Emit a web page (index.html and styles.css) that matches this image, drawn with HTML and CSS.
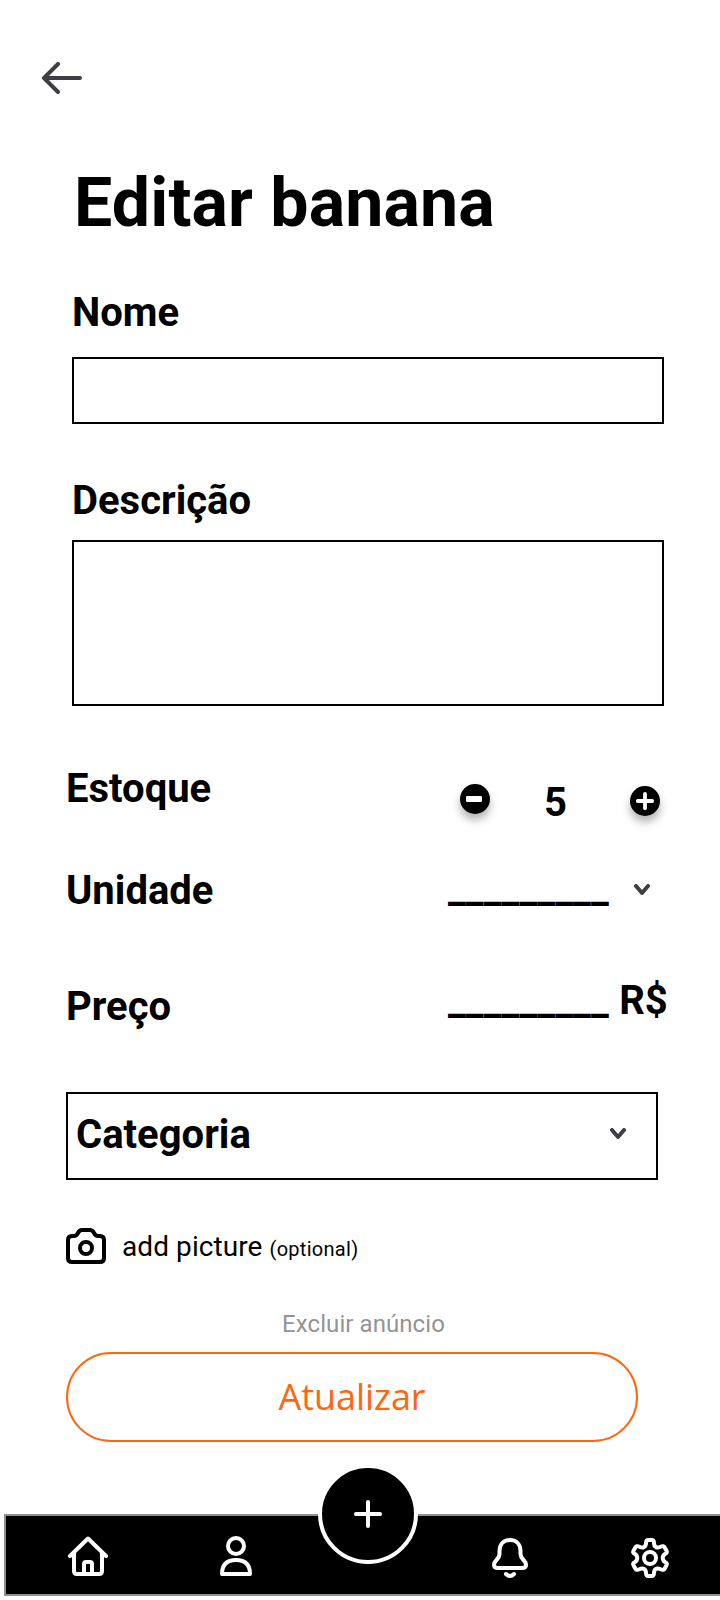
FILE: index.html
```
<!DOCTYPE html>
<html lang="pt-BR">
<head>
<meta charset="utf-8">
<title>Editar banana</title>
<link rel="stylesheet" href="styles.css">
</head>
<body>
<main class="screen">
  <header class="topbar">
    <svg class="back" width="40" height="32" viewBox="0 0 40 32"><path d="M38 16H2M16 2L2 16L16 30"/></svg>
  </header>
  <h1 class="title">Editar banana</h1>
  <form class="form">
    <section class="field">
      <h2 class="label label-name">Nome</h2>
      <div class="box box-name"></div>
    </section>
    <section class="field">
      <h2 class="label label-desc">Descrição</h2>
      <div class="box box-desc"></div>
    </section>
    <div class="row row-stock">
      <span class="label">Estoque</span>
      <div class="stepper">
        <svg class="round minus" width="30" height="30" viewBox="0 0 30 30"><circle cx="15" cy="15" r="15"/><rect x="6" y="12" width="16" height="6" rx="1.2" fill="#fff"/></svg>
        <span class="label count">5</span>
        <svg class="round plus" width="30" height="30" viewBox="0 0 30 30"><circle cx="15" cy="15" r="15"/><path d="M15 7.8V22.2M7.8 15H22.2" stroke="#fff" stroke-width="3.8" stroke-linecap="round"/></svg>
      </div>
    </div>
    <div class="row row-unit">
      <span class="label">Unidade</span>
      <div class="value">
        <span class="label unit-line">_________</span>
        <svg class="chevron chevron-unit" width="16" height="12" viewBox="0 0 16 12"><path d="M2 2L8 9L14 2"/></svg>
      </div>
    </div>
    <div class="row row-price">
      <span class="label">Preço</span>
      <div class="value">
        <span class="label price-line">_________</span>
        <span class="label currency">R$</span>
      </div>
    </div>
    <div class="category">
      <span class="label">Categoria</span>
      <svg class="chevron" width="16" height="12" viewBox="0 0 16 12"><path d="M2 2L8 9L14 2"/></svg>
    </div>
    <div class="picture">
      <svg class="camera" width="40" height="36" viewBox="0 0 40 36"><path d="M6 8H8C13 8 11 2 16 2H24C29 2 27 8 32 8H34Q38 8 38 12V30Q38 34 34 34H6Q2 34 2 30V12Q2 8 6 8Z"/><circle cx="20" cy="20" r="6"/></svg>
      <span class="picture-text">add picture <small class="optional">(optional)</small></span>
    </div>
    <div class="actions">
      <a class="delete">Excluir anúncio</a>
      <div class="submit">Atualizar</div>
    </div>
  </form>
  <nav class="nav">
    <svg class="nav-icon home" width="40" height="40" viewBox="0 0 40 40"><path d="M2 20L20 2.500L38 20M6 17V35Q6 38 9 38H31Q34 38 34 35V17M16 38V28Q16 26 18 26H22Q24 26 24 28V38"/></svg>
    <svg class="nav-icon person" width="32" height="40" viewBox="0 0 32 40"><circle cx="16" cy="10" r="8"/><path d="M2 38Q2 24 16 24Q30 24 30 38Z"/></svg>
    <svg class="nav-icon bell" width="36" height="40" viewBox="0 0 36 40"><path d="M18 2C11 2 7.500 7 7.500 13V16C7.500 19 6 20.500 4.500 22C3 23.500 2 25 2 27Q2 30 6 30H30Q34 30 34 27C34 25 33 23.500 31.500 22C30 20.500 28.500 19 28.500 16V13C28.500 7 25 2 18 2Z"/><path d="M14 36Q18 40 22 36"/></svg>
    <svg class="nav-icon gear" width="38" height="40" viewBox="0 0 38 40"><path d="M17.500 2H20.500C22.500 2 23 3 23 5C23 9 26 10.500 29 9C32 7.500 33 8 34 10L35 11.800C36.500 14 36 15 34 16C31 17.800 31 22.200 34 24C36 25 36.500 26 35 28.200L34 30C33 32 32 32.500 29 31C26 29.500 23 31 23 35C23 37 22.500 38 20.500 38H17.500C15.500 38 15 37 15 35C15 31 12 29.500 9 31C6 32.500 5 32 4 30L3 28.200C1.500 26 2 25 4 24C7 22.200 7 17.800 4 16C2 15 1.500 14 3 11.800L4 10C5 8 6 7.500 9 9C12 10.500 15 9 15 5C15 3 15.500 2 17.500 2Z"/><circle cx="19" cy="20" r="6"/></svg>
    <div class="fab"><svg class="nav-icon" width="28" height="28" viewBox="0 0 28 28"><path d="M14 2V26M2 14H26"/></svg></div>
  </nav>
</main>
</body>
</html>
```
FILE: styles.css
```
body {
  margin: 0;
  background: #fff;
  color: #000;
  font-family: Roboto, sans-serif;
}
.screen {
  display: flex;
  flex-direction: column;
  width: 720px;
  height: 1600px;
  overflow: hidden;
}
.topbar {
  display: flex;
  height: 101px;
  padding: 62px 0 0 42px;
}
.back, .chevron {
  fill: none;
  stroke: #3f3e45;
  stroke-width: 4;
  stroke-linecap: round;
  stroke-linejoin: round;
}
.title {
  margin: 0 0 0 74px;
  font-size: 68px;
  line-height: 80px;
  font-weight: 700;
  letter-spacing: .16px;
}
.form {
  display: flex;
  flex-direction: column;
  padding-top: 46px;
}
.label {
  margin: 0;
  font-size: 40px;
  line-height: 48px;
  font-weight: 700;
}
.field {
  margin-left: 72px;
}
.box {
  box-sizing: border-box;
  width: 592px;
  border: 2px solid #000;
}
.box-name {
  height: 67px;
  margin-top: 20px;
}
.label-desc {
  margin-top: 53px;
}
.box-desc {
  height: 166px;
  margin-top: 15px;
}
.row {
  display: flex;
  align-items: flex-start;
  justify-content: space-between;
  margin-left: 66px;
}
.row-stock {
  height: 102px;
  margin-top: 59px;
}
.stepper {
  display: flex;
  width: 200px;
  margin-right: 60px;
}
.round {
  overflow: visible;
  filter: drop-shadow(0 6px 4px rgba(0, 0, 0, .3));
}
.minus {
  margin-top: 19px;
}
.plus {
  margin-top: 21px;
}
.count {
  flex: 1;
  margin-top: 14px;
  padding-right: 9px;
  text-align: center;
}
.row-unit {
  height: 116px;
}
.value {
  display: flex;
  width: 272px;
}
.unit-line {
  margin-top: -2px;
}
.unit-line, .price-line {
  letter-spacing: .07px;
}
.chevron-unit {
  margin: 17px 0 0 25.400px;
}
.row-price {
  height: 109px;
}
.price-line, .currency {
  margin-top: -6px;
}
.currency {
  margin-left: 10.400px;
}
.category {
  box-sizing: border-box;
  display: flex;
  align-items: center;
  justify-content: space-between;
  width: 592px;
  height: 88px;
  margin-left: 66px;
  padding: 0 30px 2px 8px;
  border: 2px solid #000;
}
.category .chevron {
  margin-bottom: 2px;
}
.picture {
  display: flex;
  height: 36px;
  margin: 48px 0 0 66px;
  gap: 16px;
}
.camera {
  fill: none;
  stroke: #000;
  stroke-width: 4;
}
.picture-text {
  padding-top: 1px;
  font-size: 28px;
  line-height: 36px;
  letter-spacing: .08px;
}
.optional {
  font-size: 20px;
  letter-spacing: .28px;
}
.actions {
  display: flex;
  flex-direction: column;
  width: 572px;
  margin: 46px 0 0 66px;
}
.delete {
  align-self: center;
  margin-left: 23px;
  font-size: 24px;
  line-height: 28px;
  letter-spacing: .07px;
  color: #949494;
}
.submit {
  box-sizing: border-box;
  height: 90px;
  margin-top: 14px;
  border: 2px solid #ff6610;
  border-radius: 45px;
  color: #ff6610;
  font: 36px/86px "Open Sans", "Noto Sans", sans-serif;
  letter-spacing: -.05px;
  text-align: center;
}
.nav {
  position: relative;
  box-sizing: border-box;
  display: flex;
  width: 732px;
  height: 82px;
  margin: 72px 0 0 4px;
  padding: 20px 0 0 62px;
  border: 2px solid #8f8f8f;
  background: #000;
}
.nav-icon {
  flex: none;
  fill: none;
  stroke: #fff;
  stroke-width: 4;
  stroke-linecap: round;
  stroke-linejoin: round;
}
.person {
  margin-left: 112px;
}
.bell {
  margin: 2px 0 0 240px;
}
.gear {
  margin: 2px 0 0 103px;
}
.fab {
  position: absolute;
  left: 312px;
  top: -52px;
  display: flex;
  align-items: center;
  justify-content: center;
  width: 92px;
  height: 92px;
  border: 4px solid #fff;
  border-radius: 50%;
  background: #000;
}
```
